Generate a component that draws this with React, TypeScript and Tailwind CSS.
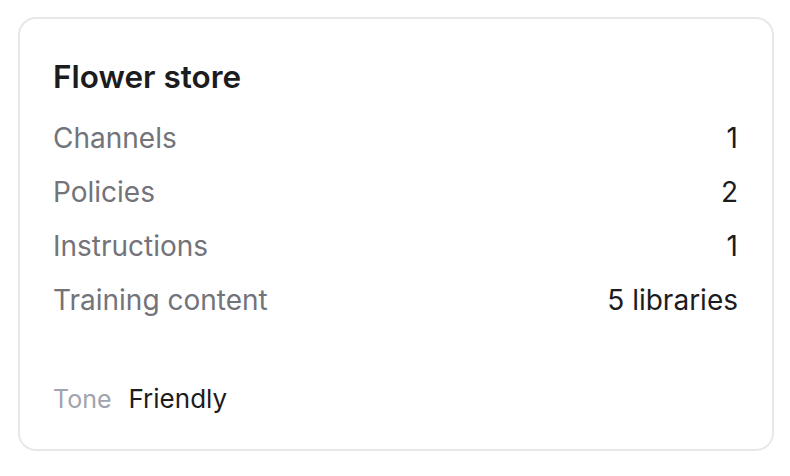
export default function App() {
    const rows = [
        { label: "Channels", value: "1" },
        { label: "Policies", value: "2" },
        { label: "Instructions", value: "1" },
        { label: "Training content", value: "5 libraries" },
    ];

    return (
        <div className="min-h-screen bg-white pl-[18px] pt-[17px] font-['Inter',sans-serif]">
            <div className="w-[756px] h-[434px] border-2 border-[#e6e8eb] rounded-[18px] pl-[33px] pr-[34px] pt-[38px] flex flex-col">
                {/* Başlık */}
                <h2 className="text-[31.5px] leading-[40px] font-semibold text-[#1c1c1e]">Flower store</h2>

                {/* Satırlar */}
                <div className="mt-[21px] flex flex-col gap-[14px]">
                    {rows.map((row) => (
                        <div key={row.label} className="flex items-center justify-between text-[28px] leading-[40px]">
                            <span className="text-[#73737a]">{row.label}</span>
                            <span className="text-[#1c1c1e]">{row.value}</span>
                        </div>
                    ))}
                </div>

                {/* Ton */}
                <div className="mt-[59px] flex items-baseline gap-[17px] leading-[40px]">
                    <span className="text-[25px] text-[#a1a3ad]">Tone</span>
                    <span className="text-[26px] text-[#1c1c1e]">Friendly</span>
                </div>
            </div>
        </div>
    );
}
